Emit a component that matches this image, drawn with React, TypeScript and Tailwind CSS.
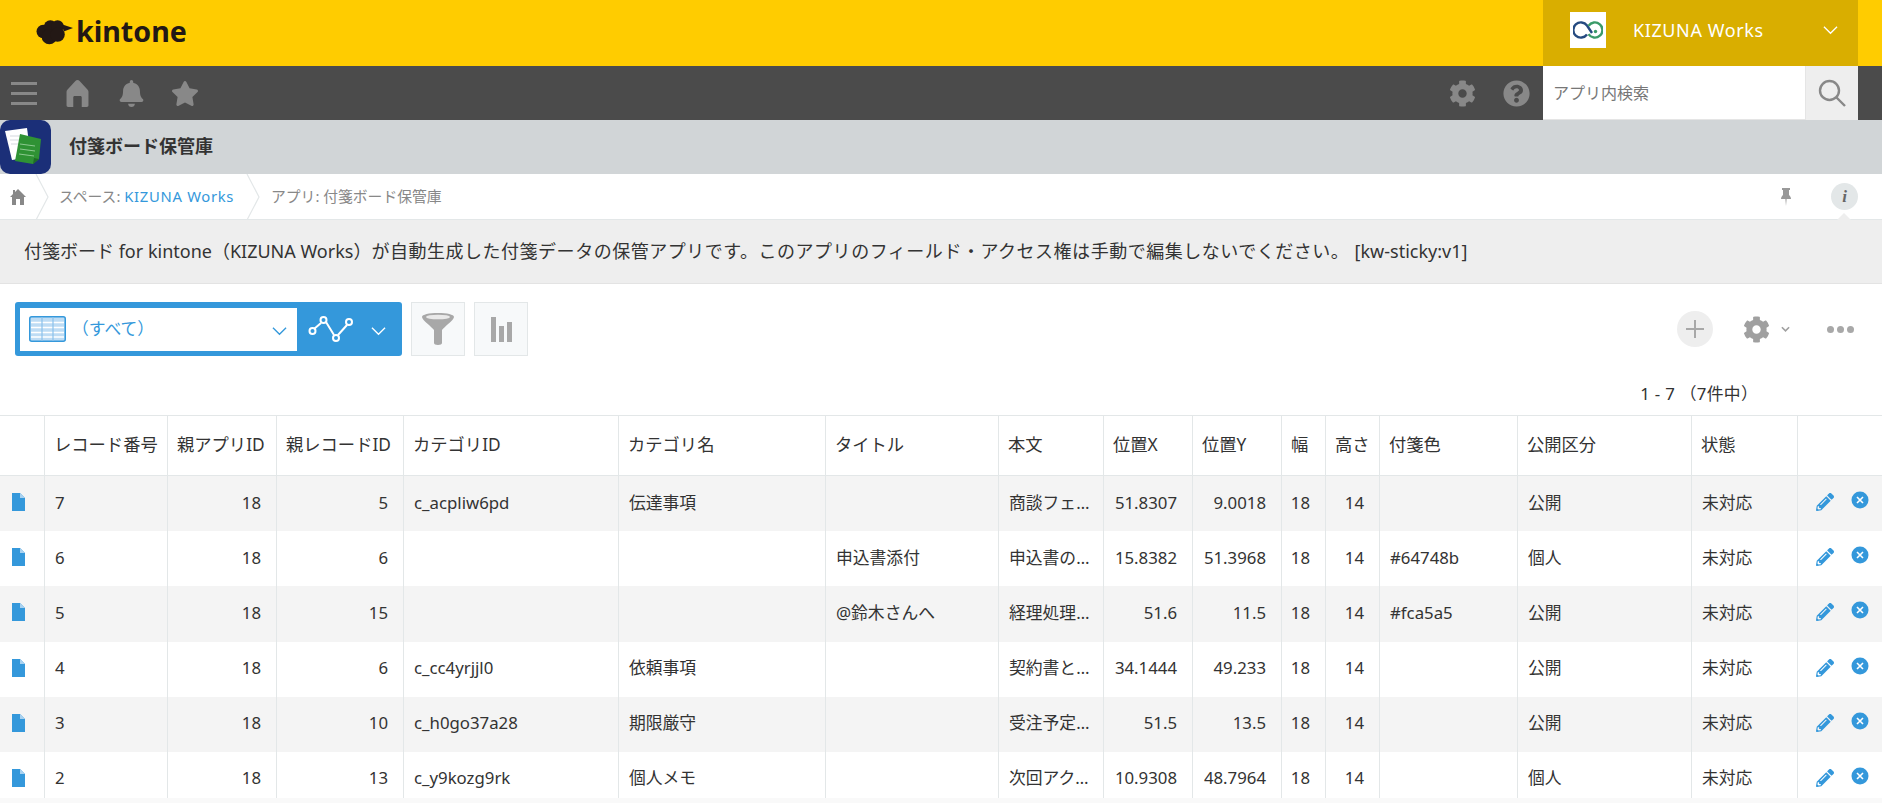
import { FaBell, FaCog, FaPencilAlt, FaQuestionCircle, FaStar } from "react-icons/fa";

const rows = [
  ["7", "18", "5", "c_acpliw6pd", "伝達事項", "", "商談フェ…", "51.8307", "9.0018", "18", "14", "", "公開", "未対応"],
  ["6", "18", "6", "", "", "申込書添付", "申込書の…", "15.8382", "51.3968", "18", "14", "#64748b", "個人", "未対応"],
  ["5", "18", "15", "", "", "@鈴木さんへ", "経理処理…", "51.6", "11.5", "18", "14", "#fca5a5", "公開", "未対応"],
  ["4", "18", "6", "c_cc4yrjjl0", "依頼事項", "", "契約書と…", "34.1444", "49.233", "18", "14", "", "公開", "未対応"],
  ["3", "18", "10", "c_h0go37a28", "期限厳守", "", "受注予定…", "51.5", "13.5", "18", "14", "", "公開", "未対応"],
  ["2", "18", "13", "c_y9kozg9rk", "個人メモ", "", "次回アク…", "10.9308", "48.7964", "18", "14", "", "個人", "未対応"],
];

const headers = ["", "レコード番号", "親アプリID", "親レコードID", "カテゴリID", "カテゴリ名", "タイトル", "本文", "位置X", "位置Y", "幅", "高さ", "付箋色", "公開区分", "状態", ""];
const rightAligned = [1, 2, 7, 8, 9, 10];

function Chevron({ className }: { className: string }) {
  return (
    <svg viewBox="0 0 16 10" className={className} fill="none" stroke="currentColor" strokeWidth="1.4">
      <path d="M1 1.5 8 8.5 15 1.5" />
    </svg>
  );
}

function KintoneCloud() {
  return (
    <svg viewBox="0 0 36 25" className="w-[37px] h-[26px] text-[#231815]" fill="currentColor">
      <circle cx="7" cy="12" r="6.5" />
      <circle cx="14" cy="7.5" r="6.5" />
      <circle cx="21" cy="7" r="6" />
      <circle cx="13" cy="17" r="7.5" />
      <circle cx="21" cy="15" r="7" />
      <path d="M25 5 36 8.5 27 12Z" />
    </svg>
  );
}

function KizunaLogo() {
  return (
    <div className="w-[36px] h-[36px] bg-white flex items-center justify-center">
      <svg viewBox="0 0 30 18" className="w-[30px] h-[18px]" fill="none" strokeWidth="2.4">
        <path d="M14 13.500A7.600 7.600 0 1 1 14 4.500L19 12" stroke="#254a80" />
        <path d="M15.500 4.800A7.600 7.600 0 1 1 15.500 13.200" stroke="#3a9a68" />
        <circle cx="22.500" cy="10.500" r="1.700" fill="#3a9a68" stroke="none" />
      </svg>
    </div>
  );
}

function AppIcon() {
  return (
    <div className="w-[51px] h-[54px] bg-[#1b2f78] rounded-[10px] shrink-0">
      <svg viewBox="0 0 51 54" className="w-[51px] h-[54px]">
        <path d="M5 11 27 8 31 37 12 40Z" fill="#fff" />
        <path d="M10 16h13M10 20h13M11 24h13" stroke="#d5d9de" strokeWidth="1" />
        <path d="M20 14 41 19 39 39 33 44 15 41Z" fill="#2f9234" />
        <path d="M33 44 34 38 39 39Z" fill="#1f6a26" />
        <path d="M20 24 35 26M20 29 35 31M19 34 34 36" stroke="#8cc98f" strokeWidth="1" />
      </svg>
    </div>
  );
}

function HomeIcon({ className }: { className: string }) {
  return (
    <svg viewBox="0 0 26 32" className={className} fill="currentColor">
      <path d="M13 0C14 0 14.800 .6 15.500 1.300L25 11.500C25.700 12.300 26 13 26 14V30C26 31.200 25.200 32 24 32H18V20.500C18 19.700 17.300 19 16.500 19H9.500C8.700 19 8 19.700 8 20.500V32H2C.8 32 0 31.200 0 30V14C0 13 .3 12.300 1 11.500L10.500 1.300C11.200 .6 12 0 13 0Z" />
    </svg>
  );
}

function SmallHome() {
  return (
    <svg viewBox="0 0 16 16" className="w-[16px] h-[16px] text-[#888]" fill="currentColor">
      <path d="M8 0 16 8H14V16H10V10H6V16H2V8H0L3 5V1H5V3Z" />
    </svg>
  );
}

function PinIcon() {
  return (
    <svg viewBox="0 0 10 18" className="w-[10px] h-[18px] shrink-0" fill="#999">
      <path d="M1 0H9V2H8V7C9 8 10 9 10 11H5.600L5 18 4.400 11H0C0 9 1 8 2 7V2H1Z" />
    </svg>
  );
}

function CrumbSeparator() {
  return (
    <svg viewBox="0 0 14 46" className="w-[14px] h-[46px] shrink-0" fill="none" stroke="#e3e7e8" strokeWidth="1.2">
      <path d="M1 0 13 23 1 46" />
    </svg>
  );
}

function TableIcon() {
  return (
    <svg viewBox="0 0 37 26" className="w-[37px] h-[26px] shrink-0">
      <rect x=".75" y=".75" width="35.5" height="24.500" rx="2" fill="#bedcf4" stroke="#3498db" strokeWidth="1.500" />
      <path d="M2 6.500H35M2 11.500H35M2 16.500H35M2 21H35" stroke="#fff" strokeWidth="1.600" />
      <path d="M13 1V25M24 1V25" stroke="#8cc2ec" strokeWidth="1.200" />
    </svg>
  );
}

function GraphIcon() {
  return (
    <svg viewBox="0 0 46 28" className="w-[46px] h-[28px] shrink-0" fill="none" stroke="#fff" strokeWidth="2">
      <path d="M6 14 13 8M18 7 26 20M30 20 39 10" />
      <circle cx="4.500" cy="16" r="3" />
      <circle cx="15.500" cy="5" r="3" />
      <circle cx="28" cy="23" r="3" />
      <circle cx="41" cy="7" r="3" />
    </svg>
  );
}

function FunnelIcon() {
  return (
    <svg viewBox="0 0 32 32" className="w-[32px] h-[32px]">
      <path d="M0 4C0 1.500 7 0 16 0S32 1.500 32 4C32 7 22 14 20 17V30C20 31 18.500 32 16 32S12 31 12 30V17C10 14 0 7 0 4Z" fill="#a8a8a8" />
      <ellipse cx="16" cy="4" rx="12" ry="2.300" fill="#e9e9e9" />
    </svg>
  );
}

function BarsIcon() {
  return (
    <svg viewBox="0 0 21 25" className="w-[21px] h-[25px]" fill="#a8a8a8">
      <rect x="0" y="0" width="5" height="25" />
      <rect x="8" y="9" width="5" height="16" />
      <rect x="16" y="5" width="5" height="20" />
    </svg>
  );
}

function DocIcon() {
  return (
    <svg viewBox="0 0 13 18" className="w-[13px] h-[18px]">
      <path d="M0 0H8L13 5V18H0Z" fill="#3498db" />
      <path d="M8 0 13 5H8Z" fill="#a9d2f0" />
    </svg>
  );
}

function DeleteIcon() {
  return (
    <svg viewBox="0 0 18 18" className="w-[18px] h-[18px] -mt-[4px]">
      <circle cx="9" cy="9" r="8.500" fill="#3498db" />
      <path d="M6 6 12 12M12 6 6 12" stroke="#fff" strokeWidth="1.600" />
    </svg>
  );
}

function GlobalHeader() {
  return (
    <div className="h-[66px] bg-[#ffcc00] flex items-center justify-between shrink-0">
      <div className="flex items-center gap-[3px] pl-[36px] pb-[2px]">
        <KintoneCloud />
        <span className="text-[28.6px] font-bold leading-none text-[#231815] -mt-[2px]">kintone</span>
      </div>
      <div className="w-[315px] h-full bg-[#d9ae00] flex items-center pl-[27px] pr-[20px] pb-[6px] mr-[24px] text-white">
        <KizunaLogo />
        <span className="ml-[27px] text-[18px] tracking-[.6px] flex-1">KIZUNA Works</span>
        <Chevron className="w-[15px] h-[10px]" />
      </div>
    </div>
  );
}

function NavBar() {
  return (
    <div className="h-[54px] bg-[#4b4b4b] flex items-center justify-between text-[#888] shrink-0">
      <div className="flex items-center pl-[11px]">
        <div className="w-[26px] flex flex-col gap-[7px]">
          <div className="h-[3px] bg-[#888]" />
          <div className="h-[3px] bg-[#888]" />
          <div className="h-[3px] bg-[#888]" />
        </div>
        <HomeIcon className="w-[27px] h-[27px] ml-[27px]" />
        <FaBell className="w-[27px] h-[27px] ml-[27px]" />
        <FaStar className="w-[28px] h-[27px] ml-[26px]" />
      </div>
      <div className="flex items-center h-full">
        <FaCog className="w-[27px] h-[27px]" />
        <FaQuestionCircle className="w-[27px] h-[27px] ml-[27px] mr-[13px]" />
        <div className="w-[262px] h-[54px] bg-white border-b border-[#e5e5e5] flex items-center pl-[10px] text-[16px] text-[#777]">
          アプリ内検索
        </div>
        <div className="w-[53px] h-[54px] bg-[#eeeeee] border-l border-[#e5e5e5] flex items-center justify-center">
          <svg viewBox="0 0 28 28" className="w-[28px] h-[28px]" fill="none" stroke="#888" strokeWidth="2.400">
            <circle cx="11.500" cy="11.500" r="9.500" />
            <path d="M18.500 18.500 27 27" />
          </svg>
        </div>
        <div className="w-[24px]" />
      </div>
    </div>
  );
}

function Breadcrumb() {
  return (
    <div className="h-[46px] bg-white border-b border-[#e3e7e8] flex items-center shrink-0 text-[14.8px] text-[#888] relative">
      <div className="w-[35px] flex justify-center pl-[1px]">
        <SmallHome />
      </div>
      <CrumbSeparator />
      <span className="ml-[10px] w-[187px] whitespace-nowrap">
        スペース: <span className="text-[#3498db] tracking-[.7px]">KIZUNA Works</span>
      </span>
      <CrumbSeparator />
      <span className="ml-[11px] flex-1">アプリ: 付箋ボード保管庫</span>
      <PinIcon />
      <div className="w-[27px] h-[27px] ml-[40px] rounded-full bg-[#e3e7e8] flex items-center justify-center mr-[24px] text-[#666] italic font-bold font-['Liberation_Serif',serif] text-[17px]">
        i
      </div>
      <div className="absolute right-[31px] -bottom-px w-0 h-0 border-x-[7px] border-x-transparent border-b-[7px] border-b-[#eeeeee]" />
    </div>
  );
}

function Toolbar() {
  return (
    <div className="flex items-start justify-between pt-[18px] pl-[15px] pr-[28px] shrink-0">
      <div className="flex items-center">
        <div className="w-[387px] h-[54px] bg-[#3498db] rounded-[3px] p-[5px] flex items-center">
          <div className="w-[277px] h-[43px] bg-white flex items-center pl-[9px] pr-[10px] text-[#3498db]">
            <TableIcon />
            <span className="ml-[6px] flex-1 text-[16.8px]">（すべて）</span>
            <Chevron className="w-[15px] h-[10px] mt-[3px]" />
          </div>
          <div className="ml-[11px]">
            <GraphIcon />
          </div>
          <Chevron className="w-[15px] h-[10px] ml-[17px] mt-[3px] text-white" />
        </div>
        <div className="w-[54px] h-[54px] ml-[9px] bg-[#f7f9fa] border border-[#e3e7e8] flex items-center justify-center">
          <FunnelIcon />
        </div>
        <div className="w-[54px] h-[54px] ml-[9px] bg-[#f7f9fa] border border-[#e3e7e8] flex items-center justify-center">
          <BarsIcon />
        </div>
      </div>
      <div className="flex items-center h-[54px] text-[#a0a0a0]">
        <div className="w-[36px] h-[36px] rounded-full bg-[#eeeeee] flex items-center justify-center">
          <svg viewBox="0 0 20 20" className="w-[20px] h-[20px]" stroke="#a8a8a8" strokeWidth="2">
            <path d="M10 1V19M1 10H19" />
          </svg>
        </div>
        <FaCog className="w-[27px] h-[27px] ml-[30px]" />
        <svg viewBox="0 0 10 6" className="w-[9px] h-[6px] ml-[11px]" fill="none" stroke="currentColor" strokeWidth="1.800">
          <path d="M1 1 5 5 9 1" />
        </svg>
        <div className="flex gap-[3px] ml-[37px]">
          <div className="w-[7px] h-[7px] rounded-full bg-[#a8a8a8]" />
          <div className="w-[7px] h-[7px] rounded-full bg-[#a8a8a8]" />
          <div className="w-[7px] h-[7px] rounded-full bg-[#a8a8a8]" />
        </div>
      </div>
    </div>
  );
}

function RecordTable() {
  return (
    <div className="flex-1 min-h-0 overflow-hidden">
      <table className="w-[1882px] table-fixed border-separate border-spacing-0 text-[16.8px] text-[#333]">
        <colgroup>
          <col className="w-[45px]" />
          <col className="w-[123px]" />
          <col className="w-[109px]" />
          <col className="w-[127px]" />
          <col className="w-[215px]" />
          <col className="w-[207px]" />
          <col className="w-[173px]" />
          <col className="w-[105px]" />
          <col className="w-[89px]" />
          <col className="w-[89px]" />
          <col className="w-[44px]" />
          <col className="w-[54px]" />
          <col className="w-[138px]" />
          <col className="w-[174px]" />
          <col className="w-[106px]" />
          <col className="w-[84px]" />
        </colgroup>
        <thead>
          <tr className="h-[61px]">
            {headers.map((h, i) => (
              <th
                key={i}
                className={`pl-[9px] pb-[2px] text-left text-[17.3px] font-normal whitespace-nowrap border-y border-[#e3e7e8] ${i < 15 ? "border-r" : ""}`}
              >
                {h}
              </th>
            ))}
          </tr>
        </thead>
        <tbody>
          {rows.map((row, r) => (
            <tr key={row[0]} className={`h-[55.2px] ${r % 2 === 0 ? "bg-[#f4f4f4]" : "bg-white"}`}>
              <td className="border-r border-[#e3e7e8] pl-[12px] pb-[3px]">
                <DocIcon />
              </td>
              {row.map((cell, i) => (
                <td
                  key={i}
                  className={
                    rightAligned.includes(i)
                      ? "border-r border-[#e3e7e8] pr-[15px] pb-[3px] text-right whitespace-nowrap"
                      : "border-r border-[#e3e7e8] pl-[10px] pb-[3px] whitespace-nowrap"
                  }
                >
                  {cell}
                </td>
              ))}
              <td>
                <div className="flex items-center gap-[17px] pl-[18px] -mt-[3px] text-[#3498db]">
                  <FaPencilAlt className="w-[18px] h-[18px]" />
                  <DeleteIcon />
                </div>
              </td>
            </tr>
          ))}
        </tbody>
      </table>
    </div>
  );
}

export default function App() {
  return (
    <div className="h-[803px] flex flex-col overflow-hidden bg-white font-['Noto_Sans','Noto_Sans_CJK_JP',sans-serif] text-[#333]">
      <GlobalHeader />
      <NavBar />
      <div className="h-[54px] bg-[#d1d5d7] flex items-center shrink-0">
        <AppIcon />
        <span className="ml-[18px] -mt-[2px] text-[18px] font-bold text-[#333]">付箋ボード保管庫</span>
      </div>
      <Breadcrumb />
      <div className="h-[64px] bg-[#eeeeee] border-b border-[#e3e3e3] flex items-center pl-[24px] text-[18px] whitespace-pre shrink-0">
        <span>付箋ボード for kintone（KIZUNA Works）</span>
        <span className="tracking-[.52px]">が自動生成した付箋データの保管アプリです。このアプリのフィールド・アクセス権は手動で編集しないでください。 </span>
        <span>[kw-sticky:v1]</span>
      </div>
      <Toolbar />
      <div className="flex justify-end pt-[26px] pb-[9px] pr-[124px] text-[16.8px] leading-[24px] tracking-[.3px] shrink-0">
        1 - 7 （7件中）
      </div>
      <RecordTable />
      <div className="h-[5px] bg-[#f9f9f9] shrink-0" />
    </div>
  );
}
